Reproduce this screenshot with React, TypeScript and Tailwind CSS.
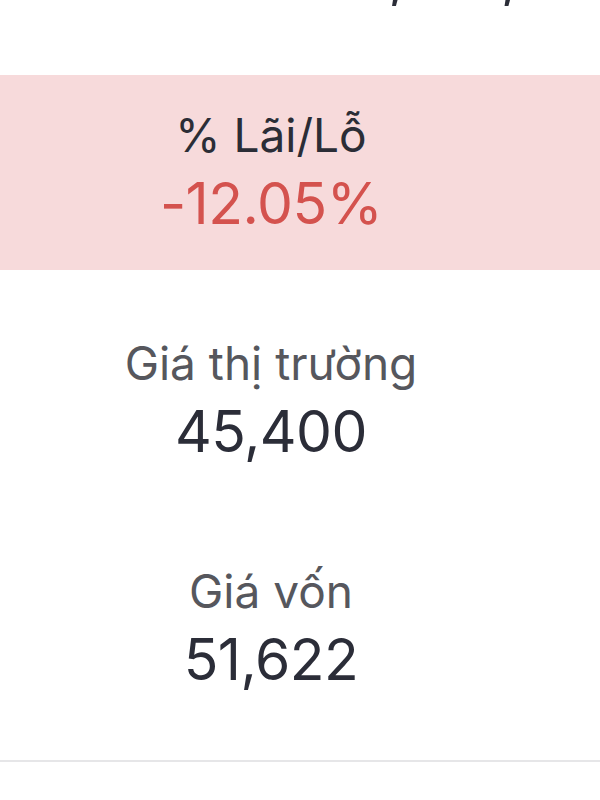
import React from 'react';

const stats = [
  { label: '% Lãi/Lỗ', value: '-12.05%', highlight: true },
  { label: 'Giá thị trường', value: '45,400' },
  { label: 'Giá vốn', value: '51,622' },
];

const StatBlock = ({ label, value, highlight }: { label: string; value: string; highlight?: boolean }) => (
  <div
    className={`flex h-[195px] flex-col items-center justify-center pr-[58px] ${
      highlight ? 'bg-[#f7dadb]' : 'bg-white'
    }`}
  >
    <div className={`text-[46px] leading-[52px] ${highlight ? 'text-[#2b2d36]' : 'text-[#56575d]'}`}>{label}</div>
    <div
      className={`mt-[11px] text-[57px] leading-[64px] tracking-[-0.5px] ${
        highlight ? 'text-[#d4524e]' : 'text-[#2b2d38]'
      }`}
    >
      {value}
    </div>
  </div>
);

export default function App() {
  return (
    <div className="h-[800px] w-[600px] overflow-hidden bg-white font-['Inter','Noto_Sans',sans-serif]">
      {/* tail of the row above, clipped by the viewport */}
      <div className="h-[75px] overflow-hidden">
        <div className="-mr-[16px] -mt-[56px] flex justify-end text-[57px] leading-[64px] tracking-[-2px] text-[#2b2d38]">
          <span>2,384,200</span>
        </div>
      </div>

      <div className="flex flex-col gap-[33px]">
        {stats.map((s) => (
          <StatBlock key={s.label} {...s} />
        ))}
      </div>

      <div className="mt-[34px] h-[2px] bg-[#e6e6e8]" />
    </div>
  );
}
